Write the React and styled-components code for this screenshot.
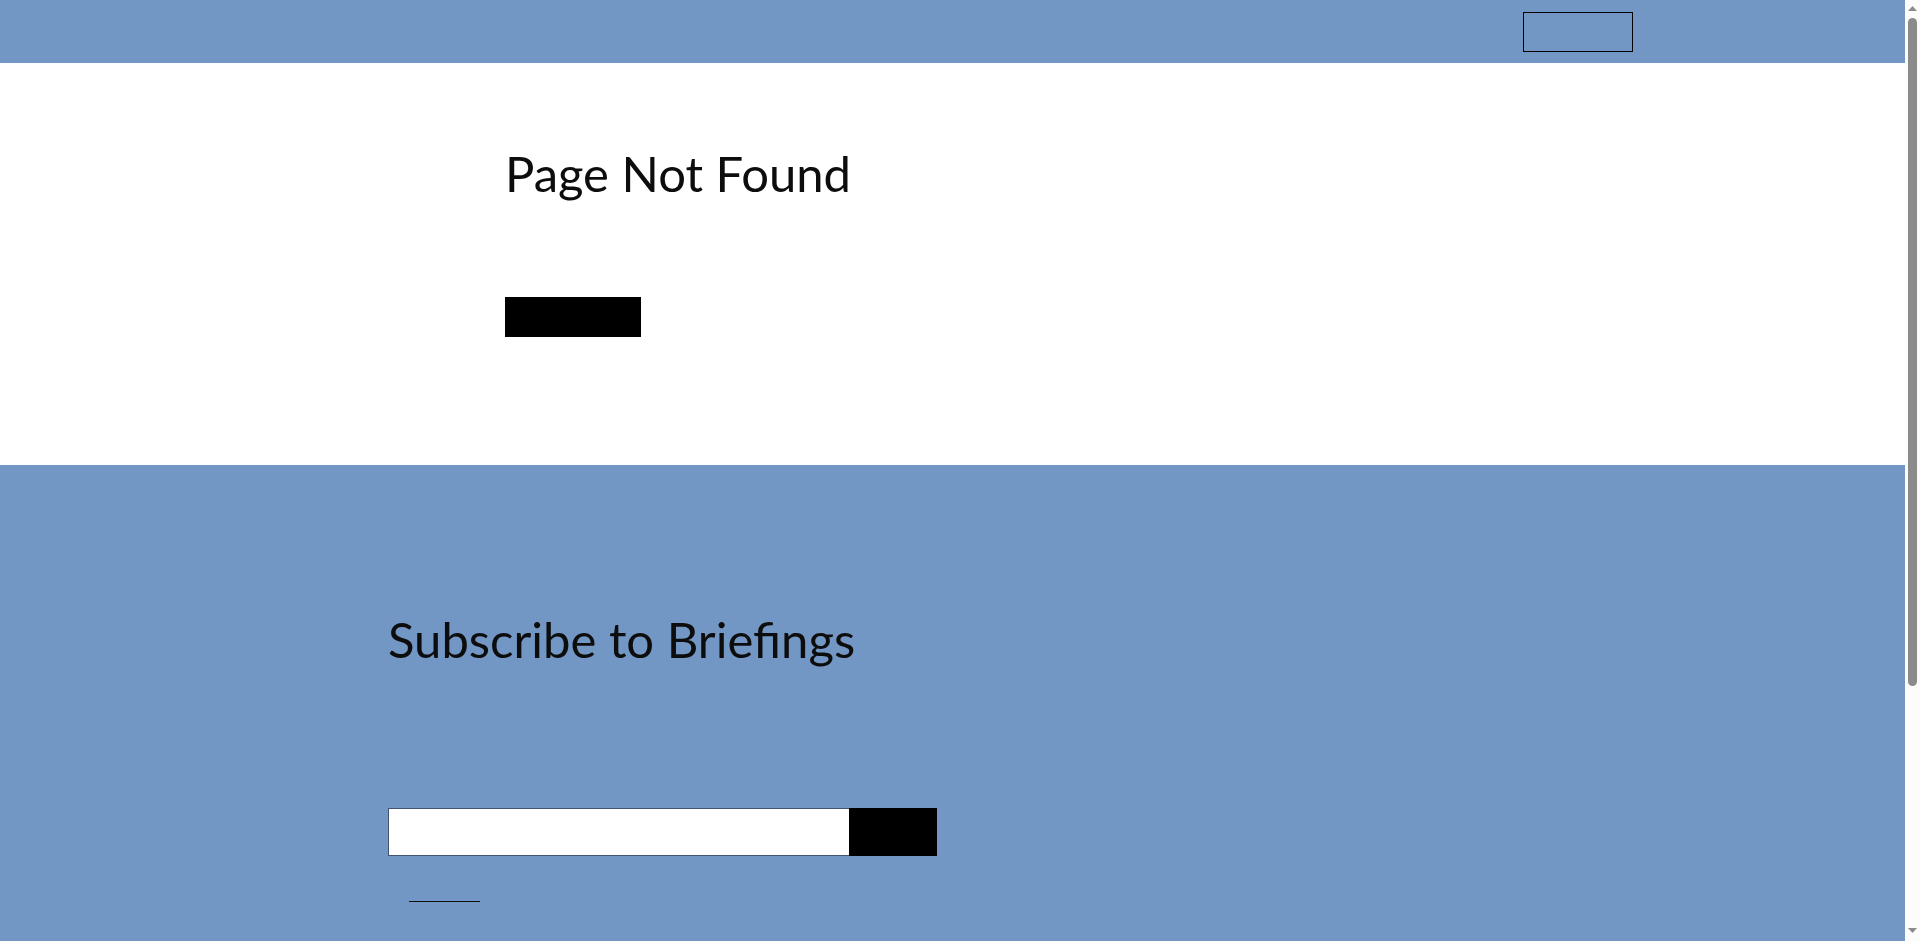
import React from "react";
import styled, { createGlobalStyle } from "styled-components";

const blue = "#7297c4";

const GlobalStyle = createGlobalStyle`
  * { box-sizing: border-box; }
  body { margin: 0; background: #fff; color: #0d0d0d; font-family: "Liberation Sans", sans-serif; }
`;

const Shell = styled.div`
  display: grid;
  grid-template-columns: minmax(0, 1fr) 15px;
  min-height: 100vh;
`;

const Page = styled.div`
  display: flex;
  flex-direction: column;
`;

const Container = styled.div`
  width: 100%;
  max-width: ${(p) => p.$max}px;
  margin: 0 auto;
`;

const Header = styled.header`
  padding: 12px 0 11px;
  background: ${blue};
`;

const HeaderRow = styled(Container)`
  display: flex;
  justify-content: flex-end;
`;

const Button = styled.button`
  display: block;
  width: ${(p) => p.$width}px;
  height: ${(p) => p.$height || 40}px;
  padding: 0;
  border: 1px solid #000;
  border-radius: 0;
  background: ${(p) => (p.$outline ? "transparent" : "#000")};
  cursor: pointer;
`;

const Main = styled.main`
  padding: 74px 0 128px;
`;

const Title = styled.h1`
  margin: 0 0 ${(p) => p.$gap}px;
  font-family: Lato, sans-serif;
  font-size: 49px;
  font-weight: 400;
  line-height: 72px;
`;

const Subscribe = styled.section`
  flex: 1;
  padding: 138px 0 39px;
  background: ${blue};
`;

const Form = styled.form`
  display: flex;
  max-width: 549px;
`;

const EmailInput = styled.input`
  flex: 1;
  min-width: 0;
  height: 48px;
  padding: 0 16px;
  border: 1px solid #3f546e;
  border-right: 0;
  border-radius: 0;
  background: #fff;
  font-size: 16px;
`;

const PolicyLink = styled.a`
  display: block;
  width: 71px;
  height: 22px;
  margin: 24px 0 0 21px;
  border-bottom: 1px solid #0d0d0d;
`;

const Scrollbar = styled.div`
  position: sticky;
  top: 0;
  height: 100vh;
  display: flex;
  flex-direction: column;
  align-items: center;
  justify-content: space-between;
  padding: 6px 0 8px;
  background: #fcfcfc;
`;

const Track = styled.div`
  flex: 1;
  width: 9px;
  margin: 7px 0;
`;

const Thumb = styled.div`
  height: 74%;
  border-radius: 5px;
  background: #8b8b8b;
`;

const Arrow = ({ down }) => (
  <svg width="9" height="5" viewBox="0 0 9 5" aria-hidden="true">
    <path d={down ? "M0 0h9L4.5 5z" : "M0 5h9L4.5 0z"} fill="#8b8b8b" />
  </svg>
);

export default function App() {
  return (
    <>
      <GlobalStyle />
      <Shell>
        <Page>
          <Header>
            <HeaderRow $max={1361}>
              <Button $width={110} $outline aria-label="Menu" />
            </HeaderRow>
          </Header>
          <Main>
            <Container $max={895}>
              <Title $gap={88}>Page Not Found</Title>
              <Button $width={136} aria-label="Home" />
            </Container>
          </Main>
          <Subscribe>
            <Container $max={1129}>
              <Title as="h2" $gap={133}>Subscribe to Briefings</Title>
              <Form onSubmit={(e) => e.preventDefault()}>
                <EmailInput type="email" aria-label="Email address" />
                <Button $width={88} $height={48} aria-label="Subscribe" />
              </Form>
              <PolicyLink href="#privacy" aria-label="Privacy policy" />
            </Container>
          </Subscribe>
        </Page>
        <Scrollbar aria-hidden="true">
          <Arrow />
          <Track>
            <Thumb />
          </Track>
          <Arrow down />
        </Scrollbar>
      </Shell>
    </>
  );
}
